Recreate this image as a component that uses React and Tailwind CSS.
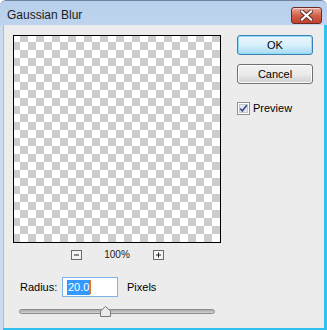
import React from 'react';

const font = { fontFamily: '"Liberation Sans", Arial, sans-serif' };

const CloseButton = () => (
  <div className="w-[31px] h-[17px] rounded-[3px] border border-[#6b2a22] bg-gradient-to-b from-[#e9a898] via-[#d2614b] to-[#c0402a] flex items-center justify-center shadow-[inset_0_1px_0_rgba(255,255,255,0.5)]">
    <svg width="13" height="11" viewBox="0 0 13 11">
      <path d="M2 1.5 L11 9.5 M11 1.5 L2 9.5" stroke="#5a2a24" strokeWidth="4" strokeLinecap="square" />
      <path d="M2 1.5 L11 9.5 M11 1.5 L2 9.5" stroke="#ffffff" strokeWidth="2.2" strokeLinecap="square" />
    </svg>
  </div>
);

const ZoomBtn = ({ plus }) => (
  <svg width="11" height="10" viewBox="0 0 11 10">
    <rect x="0.5" y="0.5" width="10" height="9" fill="#f4f4f4" stroke="#6a6a6a" />
    <path d="M3 5 H8" stroke="#222" strokeWidth="1" />
    {plus && <path d="M5.5 2.5 V7.5" stroke="#222" strokeWidth="1" />}
  </svg>
);

const Checkbox = () => (
  <svg width="13" height="13" viewBox="0 0 13 13">
    <rect x="0.5" y="0.5" width="12" height="12" fill="#ffffff" stroke="#8e8f8f" />
    <rect x="2.5" y="2.5" width="8" height="8" fill="#e4e8ee" stroke="#c3c8d0" />
    <path d="M3.2 6.5 L5.3 9 L9.8 3.2" fill="none" stroke="#3a4f8a" strokeWidth="1.7" />
  </svg>
);

const Button = ({ children, primary }) => (
  <div
    className={
      primary
        ? 'w-[76px] h-[20px] rounded-[3px] border border-[#3c7fb1] bg-gradient-to-b from-[#eaf6fd] via-[#d9f0fc] to-[#a7d9f5] shadow-[inset_0_0_0_1px_#8fdcfb] flex items-center justify-center text-[11px] text-black'
        : 'w-[76px] h-[20px] rounded-[3px] border border-[#707070] bg-gradient-to-b from-[#f2f2f2] via-[#ebebeb] to-[#cfcfcf] shadow-[inset_0_0_0_1px_#fcfcfc] flex items-center justify-center text-[11px] text-black'
    }
  >
    {children}
  </div>
);

export default function App() {
  return (
    <div className="w-[327px] h-[330px] flex flex-col bg-[#c4d8ee] border-t border-[#6f8299] rounded-t-[6px] overflow-hidden" style={font}>
      {/* title bar */}
      <div className="h-[24px] flex items-center justify-between pl-[7px] pr-[5px] bg-gradient-to-b from-[#b8d0ec] to-[#bed4ee]">
        <span className="text-[12px] text-[#1b1b1b] pt-[3px]">Gaussian Blur</span>
        <div className="pt-[4px]">
          <CloseButton />
        </div>
      </div>

      <div className="flex-1 flex">
        <div className="w-[3px] bg-[#cadcf0]" />
        <div className="flex-1 flex flex-col">
          <div className="flex-1 bg-[#ececec] border-l border-[#a9bcd3] flex pl-[9px] pt-[10px]">
            {/* left column */}
            <div className="flex flex-col w-[208px]">
              <div className="w-[208px] h-[208px] border border-black bg-[conic-gradient(#cccccc_25%,#ffffff_0_50%,#cccccc_0_75%,#ffffff_0)] bg-[length:16px_16px] bg-[position:-2px_-2px]" />
              <div className="mt-[7px] h-[10px] flex items-center justify-center gap-[16px]">
                <ZoomBtn />
                <span className="text-[10px] text-[#222] w-[39px] text-center leading-none">100%</span>
                <ZoomBtn plus />
              </div>
              <div className="mt-[17px] ml-[7px] flex items-center h-[20px]">
                <span className="text-[11px] text-black w-[42px]">Radius:</span>
                <div className="w-[56px] h-[20px] border border-[#7eb4ea] bg-white flex items-center pl-[4px]">
                  <span className="bg-[#3399ff] text-white text-[11px] leading-[15px] px-[1px]">20.0</span>
                  <span className="w-[1px] h-[14px] bg-[#e07a2a]" />
                </div>
                <span className="text-[11px] text-black ml-[9px]">Pixels</span>
              </div>
              <div className="mt-[9px] ml-[6px] relative w-[196px] h-[11px] flex items-center">
                <div className="w-full h-[5px] rounded-full border border-[#8c8c8c] bg-gradient-to-b from-[#a8a8a8] to-[#d4d4d4]" />
                <svg className="absolute left-[81px] top-0" width="11" height="11" viewBox="0 0 11 11">
                  <path d="M0.5 10.5 V5 L5.5 0.5 L10.5 5 V10.5 Z" fill="#eaeaea" stroke="#777" />
                </svg>
              </div>
            </div>

            {/* right column */}
            <div className="ml-[16px] flex flex-col">
              <Button primary>OK</Button>
              <div className="mt-[9px]">
                <Button>Cancel</Button>
              </div>
              <div className="mt-[16px] flex items-center gap-[3px]">
                <Checkbox />
                <span className="text-[11px] text-black">Preview</span>
              </div>
            </div>
          </div>
          <div className="h-[2px] bg-[#2fc0ef]" />
        </div>
        <div className="w-[3px] flex flex-col">
          <div className="flex-1 bg-[#2fc0ef]" />
        </div>
      </div>
    </div>
  );
}
